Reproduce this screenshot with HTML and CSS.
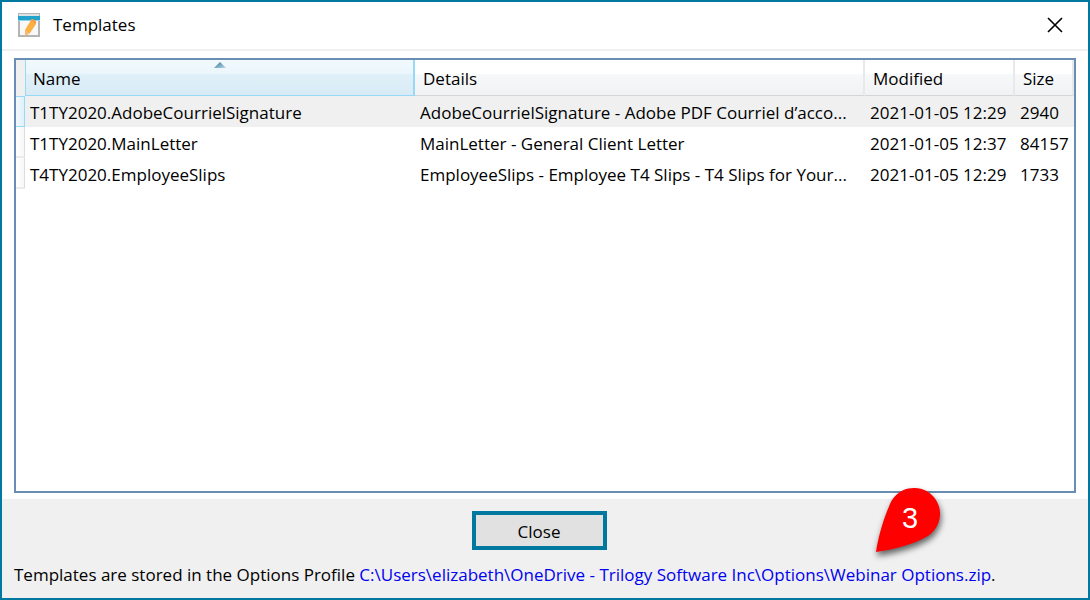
FILE: index.html
```html
<!DOCTYPE html>
<html lang="en">
<head>
    <meta charset="UTF-8">
    <meta name="viewport" content="width=device-width, initial-scale=1.0">
    <title>Templates</title>
    <link rel="stylesheet" href="styles.css">
</head>
<body>
    <div class="window">
        <header class="titlebar">
            <svg class="app-icon" viewBox="0 0 24 26" aria-hidden="true">
                <rect x="2" y="2" width="20" height="22" fill="#f8f8f8" stroke="#b4b4b4" stroke-width="2"/>
                <rect x="2" y="2" width="20" height="3" fill="#dde3e5"/>
                <rect x="1" y="4" width="22" height="4" fill="#22a3cc"/>
                <path d="M1 8.500h22" stroke="#91d3e8"/>
                <path d="M15 7l4 2v3l-6 9-5 3v-6l6-10z" fill="#fbb040"/>
                <path d="M15 7l4 2v3l-5-3z" fill="#f4a04a"/>
                <path d="M8 18l5 3-5 3z" fill="#f5b878"/>
            </svg>
            <h1 class="title">Templates</h1>
            <button class="close-x" type="button" aria-label="Close window">
                <svg viewBox="0 0 16 16" aria-hidden="true">
                    <path d="M1 1l14 14M15 1L1 15" stroke="#000" stroke-width="1.6" fill="none"/>
                </svg>
            </button>
        </header>

        <main class="list">
            <table class="grid">
                <colgroup>
                    <col class="col-mark">
                    <col class="col-name">
                    <col>
                    <col class="col-modified">
                    <col class="col-size">
                </colgroup>
                <thead>
                    <tr>
                        <td class="corner"></td>
                        <th class="sorted" aria-sort="ascending">
                            Name
                            <svg class="sort-arrow" viewBox="0 0 12 6" aria-hidden="true">
                                <defs>
                                    <linearGradient id="arrow" x1="0" x2="1" y1="0" y2="1">
                                        <stop offset="0" stop-color="#3c7391"/>
                                        <stop offset="1" stop-color="#b5dbe9"/>
                                    </linearGradient>
                                </defs>
                                <path d="M6 0l6 6H0z" fill="url(#arrow)"/>
                            </svg>
                        </th>
                        <th>Details</th>
                        <th>Modified</th>
                        <th>Size</th>
                    </tr>
                </thead>
                <tbody>
                    <tr class="selected">
                        <td class="mark"></td>
                        <td>T1TY2020.AdobeCourrielSignature</td>
                        <td>AdobeCourrielSignature - Adobe PDF Courriel d’acco...</td>
                        <td>2021-01-05 12:29</td>
                        <td>2940</td>
                    </tr>
                    <tr>
                        <td class="mark"></td>
                        <td>T1TY2020.MainLetter</td>
                        <td>MainLetter - General Client Letter</td>
                        <td>2021-01-05 12:37</td>
                        <td>84157</td>
                    </tr>
                    <tr>
                        <td class="mark"></td>
                        <td>T4TY2020.EmployeeSlips</td>
                        <td>EmployeeSlips - Employee T4 Slips - T4 Slips for Your...</td>
                        <td>2021-01-05 12:29</td>
                        <td>1733</td>
                    </tr>
                </tbody>
            </table>
        </main>

        <footer class="footer">
            <button class="close-btn" type="button">Close</button>
            <p class="path">Templates are stored in the Options Profile <a href="#">C:\Users\elizabeth\OneDrive - Trilogy Software Inc\Options\Webinar Options.zip</a>.</p>
            <div class="callout">
                <svg viewBox="0 0 80 80" aria-hidden="true">
                    <path d="M6 65C9 46 14 31 20 17A26 26 0 1 1 56 50C44 57 26 62 6 65z" fill="#fe0000"/>
                </svg>
                <span class="callout-num">3</span>
            </div>
        </footer>
    </div>
</body>
</html>
```
FILE: styles.css
```css
* {
    box-sizing: border-box;
}

body {
    margin: 0;
    font-family: "Open Sans", "Noto Sans", sans-serif;
    font-size: 17px;
    line-height: 24px;
    color: #000;
    background-color: #fff;
}

.window {
    display: flex;
    flex-direction: column;
    min-height: 100vh;
    border: 2px solid #0078a0;
}

.titlebar {
    display: flex;
    align-items: center;
    height: 49px;
    padding: 0 23px 2px 15px;
    border-bottom: 2px solid #f0f0f0;
}

.app-icon {
    width: 24px;
    height: 26px;
}

.title {
    flex: 1;
    margin: 0 0 0 12px;
    font-size: 17px;
    font-weight: normal;
}

.close-x {
    display: flex;
    padding: 2px;
    border: 0;
    background: none;
}

.close-x svg {
    width: 16px;
    height: 16px;
}

.list {
    flex: 1;
    margin: 7px 12px 6px;
    border: 2px solid #6a8db3;
}

.grid {
    width: 100%;
    table-layout: fixed;
    border-collapse: separate;
    border-spacing: 0;
}

.col-mark {
    width: 9px;
}

.col-name {
    width: 390px;
}

.col-modified {
    width: 150px;
}

.col-size {
    width: 59px;
}

.grid th,
.grid td {
    overflow: hidden;
    white-space: nowrap;
    text-align: left;
}

.grid th {
    position: relative;
    height: 36px;
    padding: 2px 0 0 8px;
    font-weight: normal;
    background: linear-gradient(#fff 40%, #f7f8fa 41%, #f1f2f4);
    border-right: 2px solid #e8e9ea;
    border-bottom: 1px solid #d5d5d5;
}

.grid th.sorted {
    padding-left: 7px;
    background: linear-gradient(#f2f9fd, #eaf6fb 40%, #e0f0f8 41%, #d8ebf5);
    border: solid #96d9f9;
    border-width: 0 2px 1px 1px;
}

.sort-arrow {
    position: absolute;
    top: 2px;
    left: 50%;
    width: 12px;
    height: 6px;
    margin-left: -6px;
}

.grid td {
    height: 31px;
    padding: 2px 0 0 5px;
}

.grid .corner {
    height: 36px;
    padding: 0;
    background-color: #f0f0f0;
}

.grid .mark {
    padding: 0;
    background: linear-gradient(90deg, #fff, #f7f7f7);
    border-right: 1px solid #dcdcdc;
    border-bottom: 2px solid #ececec;
}

.selected td {
    background-color: #f0f0f0;
}

.grid .selected .mark {
    background: linear-gradient(90deg, #f2f9fd, #e0f0f8);
    border: 1px solid #96d9f9;
    border-left: 0;
}

.footer {
    position: relative;
    display: flex;
    flex-direction: column;
    align-items: center;
    gap: 13px;
    padding: 12px 12px 11px;
    background-color: #f0f0f0;
}

.close-btn {
    width: 135px;
    height: 39px;
    margin-right: 12px;
    padding: 2px 0 0;
    border: 4px solid #0078a0;
    background-color: #e1e1e1;
    font: inherit;
    color: #000;
}

.path {
    align-self: stretch;
    margin: 0;
}

.path a {
    color: #0000f0;
    text-decoration: none;
}

.callout {
    position: absolute;
    top: -12px;
    right: 138px;
    width: 80px;
    height: 80px;
}

.callout svg {
    width: 80px;
    height: 80px;
    overflow: visible;
    filter: drop-shadow(1px 4px 3px rgba(0, 0, 0, 0.6));
}

.callout-num {
    position: absolute;
    top: 15px;
    left: 32px;
    font-family: "Liberation Sans", Arial, sans-serif;
    font-size: 29px;
    line-height: 32px;
    color: #fff;
}
```
